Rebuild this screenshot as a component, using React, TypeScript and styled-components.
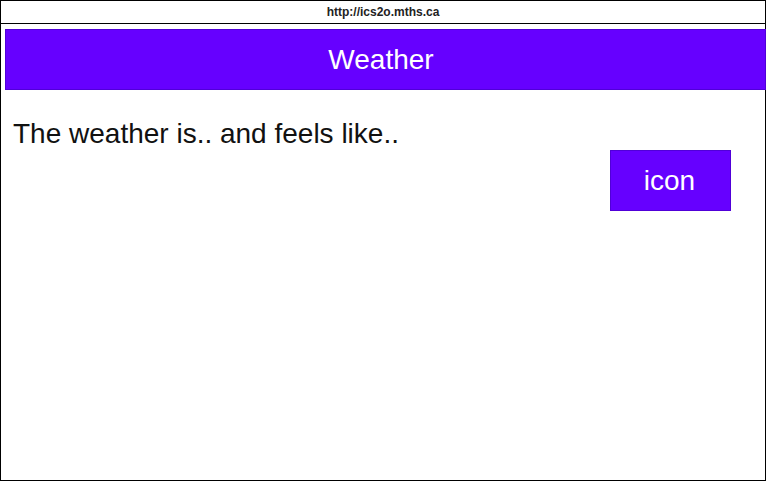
import React from "react";
import styled, { createGlobalStyle } from "styled-components";

const GlobalStyle = createGlobalStyle`
  html, body {
    margin: 0;
    padding: 0;
    background: #ffffff;
  }
  body {
    font-family: "Liberation Sans", Arial, sans-serif;
  }
`;

// outer browser-ish frame
const Frame = styled.div`
  box-sizing: border-box;
  width: 766px;
  height: 481px;
  border: 1px solid #000000;
  display: flex;
  flex-direction: column;
  background: #ffffff;
`;

const UrlBar = styled.div`
  height: 22px;
  border-bottom: 1px solid #000000;
  display: flex;
  align-items: center;
  justify-content: center;
  font-size: 12px;
  font-weight: 700;
  color: #222222;
`;

const Page = styled.div`
  flex: 1;
  display: flex;
  flex-direction: column;
  padding: 5px 0 0 4px;
`;

const Header = styled.div`
  height: 59px;
  margin-right: -1px;
  padding-right: 9px;
  background: #6600ff;
  border: 1px solid #5000d8;
  display: flex;
  align-items: center;
  justify-content: center;
  color: #ffffff;
  font-size: 28px;
`;

const Text = styled.p`
  margin: 28px 0 0 8px;
  font-size: 28px;
  line-height: 31px;
  color: #111111;
`;

const IconBox = styled.div`
  align-self: flex-end;
  width: 117px;
  height: 59px;
  margin: 1px 34px 0 0;
  padding-right: 2px;
  background: #6600ff;
  border: 1px solid #5000d8;
  display: flex;
  align-items: center;
  justify-content: center;
  color: #ffffff;
  font-size: 28px;
`;

const App: React.FC = () => {
  return (
    <>
      <GlobalStyle />
      <Frame>
        <UrlBar>http://ics2o.mths.ca</UrlBar>
        <Page>
          <Header>Weather</Header>
          <Text>The weather is.. and feels like..</Text>
          <IconBox>icon</IconBox>
        </Page>
      </Frame>
    </>
  );
};

export default App;
